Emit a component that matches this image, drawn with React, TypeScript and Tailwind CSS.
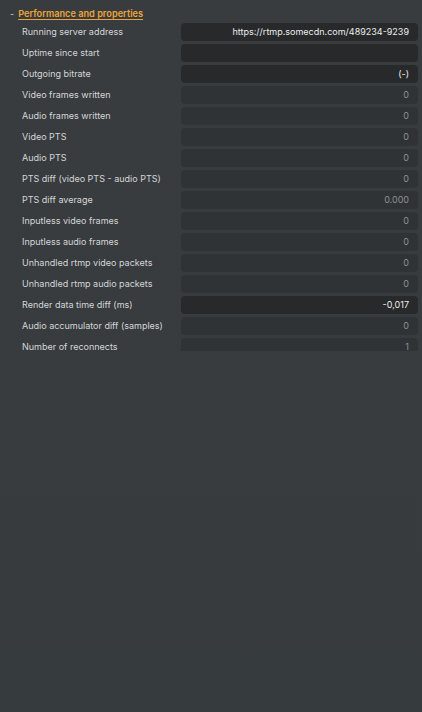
import React from 'react';

type Row = { label: string; value: string; active?: boolean };

const ROWS: Row[] = [
  { label: 'Running server address', value: 'https://rtmp.somecdn.com/489234-9239', active: true },
  { label: 'Uptime since start', value: '', active: true },
  { label: 'Outgoing bitrate', value: '(-)', active: true },
  { label: 'Video frames written', value: '0' },
  { label: 'Audio frames written', value: '0' },
  { label: 'Video PTS', value: '0' },
  { label: 'Audio PTS', value: '0' },
  { label: 'PTS diff (video PTS - audio PTS)', value: '0' },
  { label: 'PTS diff average', value: '0.000' },
  { label: 'Inputless video frames', value: '0' },
  { label: 'Inputless audio frames', value: '0' },
  { label: 'Unhandled rtmp video packets', value: '0' },
  { label: 'Unhandled rtmp audio packets', value: '0' },
  { label: 'Render data time diff (ms)', value: '-0,017', active: true },
  { label: 'Audio accumulator diff (samples)', value: '0' },
  { label: 'Number of reconnects', value: '1' },
];

export default function App() {
  return (
    <div
      className="w-[422px] h-[712px] bg-gradient-to-b from-[#393c3f] to-[#363b3e] text-[9px] leading-[10px] overflow-hidden"
      style={{ fontFamily: 'Inter, "Noto Sans", sans-serif' }}
    >
      <div className="h-[351px] overflow-hidden">
        {/* Section header */}
        <div className="flex items-center h-[23px] pl-[10px] pt-[4px] gap-[4px]">
          <span className="text-[#c9cbcc]">-</span>
          <span className="text-[9.2px] font-semibold text-[#e8a43a] underline underline-offset-2">Performance and properties</span>
        </div>

        {/* Rows */}
        <div className="flex flex-col gap-[3px]">
          {ROWS.map((r) => (
            <div key={r.label} className="flex items-center h-[18px]">
              <span className="w-[181px] shrink-0 pl-[22px] text-[#d4d6d7] whitespace-nowrap">{r.label}</span>
              <div
                className={
                  r.active
                    ? 'flex-1 mr-[4px] h-full rounded-[4px] bg-[#27292b] flex items-center justify-end pr-[9px] text-[#eceded]'
                    : 'flex-1 mr-[4px] h-full rounded-[4px] bg-[#303336] flex items-center justify-end pr-[9px] text-[#8c8f91]'
                }
              >
                {r.value}
              </div>
            </div>
          ))}
        </div>
      </div>
    </div>
  );
}
